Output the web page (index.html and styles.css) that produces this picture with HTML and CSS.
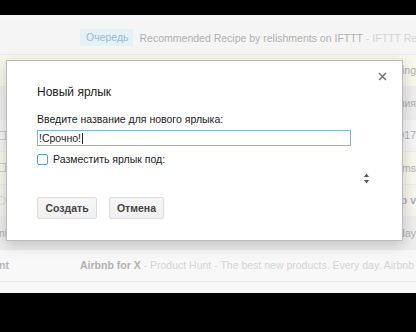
FILE: index.html
```html
<!DOCTYPE html>
<html lang="ru">
<head>
<meta charset="utf-8">
<link rel="stylesheet" href="styles.css">
</head>
<body>
<div class="screen">
  <div class="blackbar top"></div>
  <div class="page">
    <div class="list">
      <div class="row r-grey">
        <div class="left"></div>
        <div class="subj">
          <span class="tag">Очередь</span>
          <span class="title">Recommended Recipe by relishments on IFTTT</span>
          <span class="snip">&nbsp;- IFTTT Recipe: Get notified</span>
        </div>
      </div>
      <div class="row r-yellow">
        <div class="left"></div>
        <div class="subj end"><span class="title">Trending</span></div>
      </div>
      <div class="row r-dark">
        <div class="left"></div>
        <div class="subj end"><span class="title">Обновления</span></div>
      </div>
      <div class="row r-grey">
        <div class="left"><span class="cb"></span></div>
        <div class="subj end"><span class="title">2017</span></div>
      </div>
      <div class="row r-yellow">
        <div class="left"><span class="cb"></span></div>
        <div class="subj end"><span class="title">items</span></div>
      </div>
      <div class="row r-yellow2">
        <div class="left"><span class="dot"></span></div>
        <div class="subj end"><span class="title bold">Startup v</span></div>
      </div>
      <div class="row r-dark">
        <div class="left"><span class="sender">nt</span></div>
        <div class="subj end"><span class="title">Every day</span></div>
      </div>
      <div class="row r-white">
        <div class="left"><span class="sender bold">nt</span></div>
        <div class="subj">
          <span class="title bold">Airbnb for X</span>
          <span class="snip">&nbsp;- Product Hunt - The best new products. Every day. Airbnb</span>
        </div>
      </div>
      <div class="row r-white">
        <div class="left"></div>
        <div class="subj"><span class="title">Seed Stage Startup of The Year</span></div>
      </div>
    </div>

    <div class="dialog">
      <svg class="close" width="9" height="9" viewBox="0 0 9 9" aria-hidden="true">
        <path d="M1 1 L8 8 M8 1 L1 8" stroke="#777" stroke-width="1.6" fill="none"/>
      </svg>
      <div class="d-title">Новый ярлык</div>
      <div class="d-label">Введите название для нового ярлыка:</div>
      <div class="d-input"><span class="val">!Срочно!</span><span class="caret"></span></div>
      <label class="d-check"><span class="box"></span><span>Разместить ярлык под:</span></label>
      <div class="d-select">
        <svg width="5" height="11" viewBox="0 0 5 11" aria-hidden="true">
          <path d="M2.5 0.5 L5 4 L0 4 Z" fill="#555"/>
          <path d="M0 7 L5 7 L2.5 10.5 Z" fill="#555"/>
        </svg>
      </div>
      <div class="d-buttons">
        <button class="btn btn-create">Создать</button>
        <button class="btn btn-cancel">Отмена</button>
      </div>
    </div>
  </div>
  <div class="blackbar bottom"></div>
</div>
</body>
</html>
```
FILE: styles.css
```css
html, body {
  margin: 0;
  padding: 0;
  background: #000;
}
body {
  font-family: "Liberation Sans", Arial, sans-serif;
  width: 416px;
  height: 332px;
  overflow: hidden;
}
.screen {
  display: flex;
  flex-direction: column;
  width: 416px;
  height: 332px;
}
.blackbar.top { height: 15px; background: #000; flex: none; }
.blackbar.bottom { flex: 1; background: #000; }
.page {
  position: relative;
  height: 278px;
  background: #f6f6f6;
  overflow: hidden;
  flex: none;
}
.list {
  padding-top: 7px;
  display: flex;
  flex-direction: column;
}
.row {
  height: 32.5px;
  display: flex;
  align-items: center;
  box-sizing: border-box;
  border-bottom: 1px solid #ececec;
  font-size: 10.5px;
  white-space: nowrap;
}
.r-grey { background: #f5f5f5; }
.r-yellow { background: #f8f8ec; }
.r-yellow2 { background: #f6f6ef; }
.r-dark { background: #eeeeee; }
.r-white { background: #f8f8f8; }
.left {
  width: 80px;
  flex: none;
  display: flex;
  align-items: center;
  overflow: hidden;
}
.subj {
  flex: 1;
  min-width: 0;
  overflow: hidden;
  display: flex;
  align-items: center;
}
.subj.end { justify-content: flex-end; }
.tag {
  background: #e4f1f7;
  color: #9bbccf;
  padding: 3px 4px 3px 6px;
  margin-right: 7px;
  line-height: 11px;
}
.title { color: #b0b0b0; }
.snip { color: #d4d4d4; }
.bold { font-weight: bold; }
.sender { color: #b5b5b5; margin-left: -1px; }
.cb {
  width: 6px;
  height: 9px;
  border: 1px solid #cfcfcf;
  border-left: none;
  box-sizing: border-box;
  display: block;
}
.dot {
  width: 7px;
  height: 7px;
  border: 1px solid #d5d5d5;
  border-radius: 50%;
  margin-left: -3px;
  display: block;
}

/* dialog */
.dialog {
  position: absolute;
  left: 6px;
  top: 45px;
  width: 397px;
  height: 181px;
  box-sizing: border-box;
  background: #fff;
  border: 1px solid #bcbcbc;
  box-shadow: 0 4px 14px rgba(0,0,0,0.2);
  padding: 24px 30px 0 30px;
  display: flex;
  flex-direction: column;
  align-items: flex-start;
}
.close {
  position: absolute;
  right: 15px;
  top: 11px;
}
.d-title {
  font-size: 12px;
  line-height: 15px;
  color: #222;
}
.d-label {
  margin-top: 13px;
  font-size: 10.5px;
  line-height: 13px;
  color: #222;
}
.d-input {
  margin-top: 4px;
  width: 314px;
  height: 16px;
  box-sizing: border-box;
  border: 1px solid #7db7e8;
  display: flex;
  align-items: center;
  padding-left: 1px;
  font-size: 10.5px;
  color: #222;
}
.caret {
  width: 1px;
  height: 11px;
  background: #222;
  margin-left: 1px;
}
.d-check {
  margin-top: 7px;
  display: flex;
  align-items: center;
  gap: 5px;
  font-size: 10.5px;
  line-height: 13px;
  color: #222;
}
.box {
  width: 11px;
  height: 11px;
  box-sizing: border-box;
  border: 1px solid #5b9ee0;
  border-radius: 2px;
  background: #fff;
}
.d-select {
  margin-top: 7px;
  align-self: stretch;
  display: flex;
  justify-content: flex-end;
  padding-right: 3px;
  height: 11px;
}
.d-select svg { display: block; }
.d-buttons {
  margin-top: 13px;
  display: flex;
  gap: 12px;
}
.btn {
  height: 22px;
  box-sizing: border-box;
  border: 1px solid #dcdcdc;
  border-radius: 2px;
  background: linear-gradient(#f6f6f6, #f0f0f0);
  font-family: "Liberation Sans", Arial, sans-serif;
  font-weight: bold;
  font-size: 10.5px;
  color: #444;
  padding: 0;
  margin: 0;
}
.btn-create { width: 60px; }
.btn-cancel { width: 55px; }
```
